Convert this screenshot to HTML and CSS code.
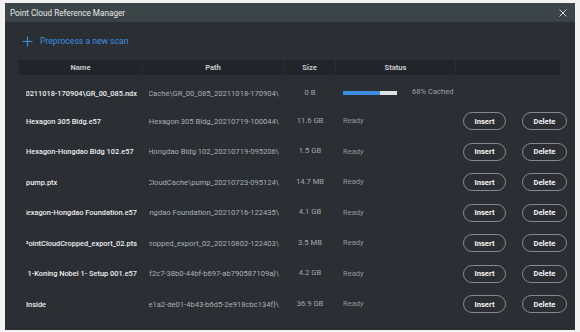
FILE: index.html
```html
<!DOCTYPE html>
<html lang="en">

<head>
    <meta charset="UTF-8">
    <title>Point Cloud Reference Manager</title>
    <link rel="stylesheet" href="styles.css">
</head>

<body>
    <div class="dialog">
        <div class="title-bar">
            <span class="title">Point Cloud Reference Manager</span>
            <svg class="close" width="8" height="8" viewBox="0 0 8 8">
                <path d="M0.5 0.5L7.5 7.5M7.5 0.5L0.5 7.5" stroke="#d4d9d9" stroke-width="1" fill="none" />
            </svg>
        </div>

        <div class="content">
            <a class="add-scan" href="#">
                <svg width="11" height="11" viewBox="0 0 11 11">
                    <path d="M5.5 0.5V10.5M0.5 5.5H10.5" stroke="#3d8ee0" stroke-width="1.2" fill="none" />
                </svg>
                Preprocess a new scan
            </a>

            <div class="table">
                <div class="head">
                    <div class="cell c-name">Name</div>
                    <div class="cell c-path">Path</div>
                    <div class="cell c-size">Size</div>
                    <div class="cell c-status">Status</div>
                    <div class="cell c-act"></div>
                </div>

                <div class="row first">
                    <div class="cell c-name"><span class="clip"><span>GR_00_085_20211018-170904\GR_00_085.ndx</span></span></div>
                    <div class="cell c-path"><span class="clip"><span>C:\PointCloudCache\GR_00_085_20211018-170904\</span></span></div>
                    <div class="cell c-size">0 B</div>
                    <div class="cell c-status">
                        <div class="progress"><div class="fill" style="width: 68%"></div></div>
                        <span class="cached">68% Cached</span>
                    </div>
                    <div class="cell c-act"></div>
                </div>

                <div class="row">
                    <div class="cell c-name"><span class="clip"><span>Hexagon 305 Bldg.e57</span></span></div>
                    <div class="cell c-path"><span class="clip"><span>C:\PointCloudCache\Hexagon 305 Bldg_20210719-100044\</span></span></div>
                    <div class="cell c-size">11.6 GB</div>
                    <div class="cell c-status">Ready</div>
                    <div class="cell c-act"><button class="btn">Insert</button><button class="btn del">Delete</button></div>
                </div>

                <div class="row">
                    <div class="cell c-name"><span class="clip"><span>Hexagon-Hongdao Bldg 102.e57</span></span></div>
                    <div class="cell c-path"><span class="clip"><span>C:\PointCloudCache\Hexagon-Hongdao Bldg 102_20210719-095206\</span></span></div>
                    <div class="cell c-size">1.5 GB</div>
                    <div class="cell c-status">Ready</div>
                    <div class="cell c-act"><button class="btn">Insert</button><button class="btn del">Delete</button></div>
                </div>

                <div class="row">
                    <div class="cell c-name"><span class="clip"><span>pump.ptx</span></span></div>
                    <div class="cell c-path"><span class="clip"><span>C:\PointCloudCache\pump_20210723-095124\</span></span></div>
                    <div class="cell c-size">14.7 MB</div>
                    <div class="cell c-status">Ready</div>
                    <div class="cell c-act"><button class="btn">Insert</button><button class="btn del">Delete</button></div>
                </div>

                <div class="row">
                    <div class="cell c-name"><span class="clip"><span>Hexagon-Hongdao Foundation.e57</span></span></div>
                    <div class="cell c-path"><span class="clip"><span>C:\PointCloudCache\Hexagon-Hongdao Foundation_20210716-122435\</span></span></div>
                    <div class="cell c-size">4.1 GB</div>
                    <div class="cell c-status">Ready</div>
                    <div class="cell c-act"><button class="btn">Insert</button><button class="btn del">Delete</button></div>
                </div>

                <div class="row">
                    <div class="cell c-name"><span class="clip"><span>PointCloudCropped_export_02.pts</span></span></div>
                    <div class="cell c-path"><span class="clip"><span>C:\PointCloudCache\PointCloudCropped_export_02_20210802-122403\</span></span></div>
                    <div class="cell c-size">3.5 MB</div>
                    <div class="cell c-status">Ready</div>
                    <div class="cell c-act"><button class="btn">Insert</button><button class="btn del">Delete</button></div>
                </div>

                <div class="row">
                    <div class="cell c-name"><span class="clip"><span>Site 1-Koning Nobel 1- Setup 001.e57</span></span></div>
                    <div class="cell c-path"><span class="clip"><span>C:\PointCloudCache\{b112f2c7-38b0-44bf-b697-ab790587109a}\</span></span></div>
                    <div class="cell c-size">4.2 GB</div>
                    <div class="cell c-status">Ready</div>
                    <div class="cell c-act"><button class="btn">Insert</button><button class="btn del">Delete</button></div>
                </div>

                <div class="row">
                    <div class="cell c-name"><span class="clip"><span>Inside</span></span></div>
                    <div class="cell c-path"><span class="clip"><span>C:\PointCloudCache\{0c5ee1a2-de01-4b43-b6d5-2e918cbc134f}\</span></span></div>
                    <div class="cell c-size">36.9 GB</div>
                    <div class="cell c-status">Ready</div>
                    <div class="cell c-act"><button class="btn">Insert</button><button class="btn del">Delete</button></div>
                </div>
            </div>
        </div>
    </div>
</body>

</html>
```

FILE: styles.css
```css
body {
    margin: 0;
    padding: 3px 5px 0 5px;
    background-color: #f2f2f2;
    font-family: Roboto, "Liberation Sans", sans-serif;
    overflow: hidden;
}

.dialog {
    width: 570px;
    height: 327px;
    background-color: #2b2e33;
    display: flex;
    flex-direction: column;
    overflow: hidden;
}

.title-bar {
    height: 19px;
    flex-shrink: 0;
    background-color: #3b4446;
    display: flex;
    align-items: center;
    justify-content: space-between;
    padding: 0 8px 0 5px;
}

.title {
    font-size: 8.2px;
    color: #e6e8e8;
}

.content {
    padding: 0 15px 0 14px;
}

.add-scan {
    display: flex;
    align-items: center;
    gap: 7px;
    height: 38px;
    padding-left: 3px;
    color: #3d8ee0;
    font-size: 8.6px;
    text-decoration: none;
}

.table {
    width: 541px;
}

.head,
.row {
    display: flex;
}

.head {
    height: 15px;
    background-color: #212428;
    font-size: 7.6px;
    font-weight: 700;
    color: #c4c8cc;
}

.head .cell {
    justify-content: center;
    border-right: 1px solid #2b2e33;
}

.head .cell:last-child {
    border-right: none;
}

.row {
    height: 30.5px;
    font-size: 7.6px;
}

.row.first {
    height: 26px;
    margin-top: 5px;
}

.cell {
    display: flex;
    align-items: center;
    box-sizing: border-box;
    white-space: nowrap;
    overflow: hidden;
    flex-shrink: 0;
}

/* long names keep their end visible, cut at the start */
.clip {
    display: block;
    width: 100%;
    overflow: hidden;
    direction: rtl;
    text-align: left;
}

.clip span {
    direction: ltr;
    unicode-bidi: isolate;
}

.row .c-name {
    padding: 0 6px 0 7px;
    color: #eceef0;
    font-weight: 500;
    font-size: 7.4px;
}

.row .c-path {
    padding: 0 5px 0 6px;
    color: #a9b0b8;
}

.row .c-size {
    justify-content: center;
    color: #a3a8ae;
    padding-bottom: 2px;
}

.row .c-status {
    padding: 0 0 1px 7px;
    color: #8d96a2;
}

.c-name {
    width: 124px;
}

.c-path {
    width: 141px;
}

.c-size {
    width: 52px;
}

.c-status {
    width: 120px;
}

.c-act {
    width: 104px;
}

.row .c-act {
    overflow: visible;
    padding-left: 7px;
    gap: 16px;
}

.progress {
    width: 54px;
    height: 4px;
    background-color: #e2e2e2;
    margin-right: 15px;
}

.fill {
    height: 100%;
    background-color: #3d8ee0;
}

.cached {
    color: #9aa2ac;
    padding-bottom: 2px;
}

.btn {
    width: 43px;
    height: 18px;
    flex-shrink: 0;
    border: 1px solid #868b92;
    border-radius: 9px;
    background-color: transparent;
    color: #f2f4f6;
    font-family: Roboto, "Liberation Sans", sans-serif;
    font-size: 7.6px;
    font-weight: 700;
    padding: 0;
}

.btn.del {
    width: 45px;
}
```
